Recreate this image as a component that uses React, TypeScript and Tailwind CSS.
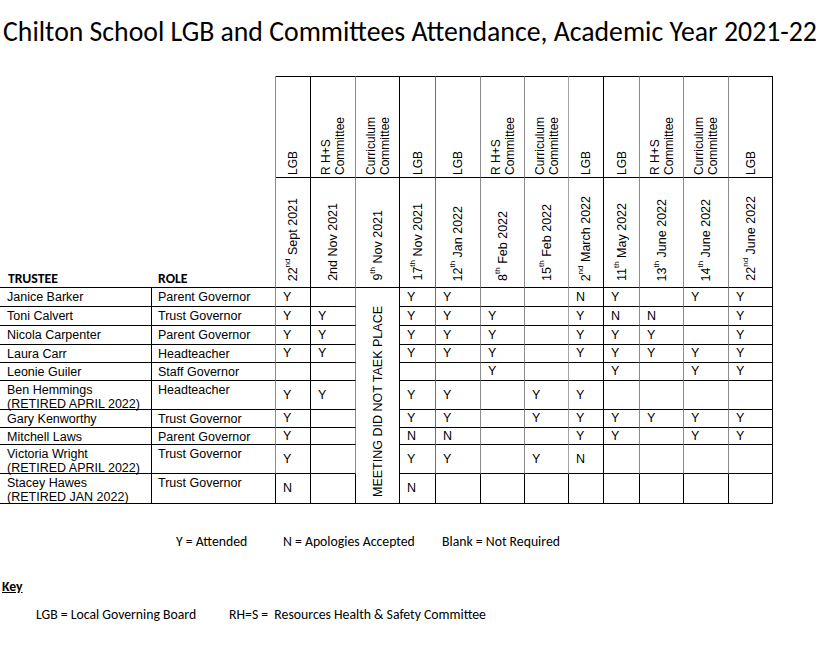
const calibri = "font-['Carlito','Lato',sans-serif]";

type Col = { label: string[]; day: string; sup: string; rest: string; edge: string };

// right-edge colour per meeting column, as in the Word table
const cols: Col[] = [
  { label: ["LGB"], day: "22", sup: "nd", rest: " Sept 2021", edge: "border-r-black" },
  { label: ["R H+S", "Committee"], day: "2nd Nov 2021", sup: "", rest: "", edge: "border-r-[#8c8c8c]" },
  { label: ["Curriculum", "Committee"], day: "9", sup: "th", rest: " Nov 2021", edge: "border-r-black" },
  { label: ["LGB"], day: "17", sup: "th", rest: " Nov 2021", edge: "border-r-[#6e6e6e]" },
  { label: ["LGB"], day: "12", sup: "th", rest: " Jan 2022", edge: "border-r-[#8c8c8c]" },
  { label: ["R H+S", "Committee"], day: "8", sup: "th", rest: " Feb 2022", edge: "border-r-[#8c8c8c]" },
  { label: ["Curriculum", "Committee"], day: "15", sup: "th", rest: " Feb 2022", edge: "border-r-[#a6a6a6]" },
  { label: ["LGB"], day: "2", sup: "nd", rest: " March 2022", edge: "border-r-black" },
  { label: ["LGB"], day: "11", sup: "th", rest: " May 2022", edge: "border-r-[#8c8c8c]" },
  { label: ["R H+S", "Committee"], day: "13", sup: "th", rest: " June 2022", edge: "border-r-[#8c8c8c]" },
  { label: ["Curriculum", "Committee"], day: "14", sup: "th", rest: " June 2022", edge: "border-r-[#8c8c8c]" },
  { label: ["LGB"], day: "22", sup: "nd", rest: " June 2022", edge: "border-r-black" },
];

const trustees = [
  { name: ["Janice Barker"], role: "Parent Governor", marks: "Y,,-,Y,Y,,,N,Y,,Y,Y" },
  { name: ["Toni Calvert"], role: "Trust Governor", marks: "Y,Y,-,Y,Y,Y,,Y,N,N,,Y" },
  { name: ["Nicola Carpenter"], role: "Parent Governor", marks: "Y,Y,-,Y,Y,Y,,Y,Y,Y,,Y" },
  { name: ["Laura Carr"], role: "Headteacher", marks: "Y,Y,-,Y,Y,Y,,Y,Y,Y,Y,Y" },
  { name: ["Leonie Guiler"], role: "Staff Governor", marks: ",,-,,,Y,,,Y,,Y,Y" },
  { name: ["Ben Hemmings", "(RETIRED APRIL 2022)"], role: "Headteacher", marks: "Y,Y,-,Y,Y,,Y,Y,,,," },
  { name: ["Gary Kenworthy"], role: "Trust Governor", marks: "Y,,-,Y,Y,,Y,Y,Y,Y,Y,Y" },
  { name: ["Mitchell Laws"], role: "Parent Governor", marks: "Y,,-,N,N,,,Y,Y,,Y,Y" },
  { name: ["Victoria Wright", "(RETIRED APRIL 2022)"], role: "Trust Governor", marks: "Y,,-,Y,Y,,Y,N,,,," },
  { name: ["Stacey Hawes", "(RETIRED JAN 2022)"], role: "Trust Governor", marks: "N,,-,N,,,,,,,," },
];

function Sideways({ children, className = "" }: { children: React.ReactNode; className?: string }) {
  return <span className={`[writing-mode:vertical-rl] rotate-180 whitespace-nowrap ${className}`}>{children}</span>;
}

export default function App() {
  return (
    <div className="w-[829px] h-[658px] bg-white text-black overflow-hidden">
      <h1 className={`${calibri} pt-[17px] pl-[3px] text-[27.75px] leading-[30px] whitespace-nowrap`}>
        Chilton School LGB and Committees Attendance, Academic Year 2021-22
      </h1>

      <div className="mt-[29px] grid w-[773px] grid-cols-[152px_124px_35px_45px_44px_36px_45px_44px_44px_35px_36px_44px_45px_44px] grid-rows-[102px_110px_19px_19px_19px_18px_18px_29px_18px_17px_29px_30px] font-['Liberation_Sans',Arial,sans-serif] text-[12.5px]">
        {/* committee names */}
        <div className="col-span-2 border-r border-r-[#8c8c8c]" />
        {cols.map((c, i) => (
          <div key={"l" + i} className={`flex items-end justify-center border-t border-b border-r border-black pb-[2px] ${c.edge}`}>
            <Sideways className="text-[12px] leading-[14px]">
              {c.label.map((l, j) => (
                <span key={j} className="block">{l}</span>
              ))}
            </Sideways>
          </div>
        ))}

        {/* meeting dates */}
        <div className={`${calibri} flex items-end pl-[8px] pb-[1px] border-b border-black font-bold text-[13.8px] leading-[15px]`}>TRUSTEE</div>
        <div className={`${calibri} flex items-end pl-[6px] pb-[1px] border-b border-r border-black border-r-[#8c8c8c] font-bold text-[13.8px] leading-[15px]`}>ROLE</div>
        {cols.map((c, i) => (
          <div key={"d" + i} className={`flex items-end justify-center border-b border-r border-black pb-[6px] ${c.edge}`}>
            <Sideways className="leading-[14px]">
              {c.day}
              {c.sup && <sup className="static align-super text-[8px]">{c.sup}</sup>}
              {c.rest}
            </Sideways>
          </div>
        ))}

        {trustees.map((t, r) => {
          const last = r === trustees.length - 1;
          return [
            <div key={"n" + r} className="pl-[7px] pt-[2px] leading-[14px] border-b border-r border-black whitespace-nowrap">
              {t.name.map((n, j) => (
                <div key={j}>{n}</div>
              ))}
            </div>,
            <div key={"r" + r} className={`pl-[6px] pt-[2px] leading-[14px] border-b border-r border-black whitespace-nowrap ${last ? "" : "border-r-[#8c8c8c]"}`}>
              {t.role}
            </div>,
            ...t.marks.split(",").map((m, i) => {
              if (m === "-") {
                if (r > 0) return null;
                return (
                  <div key={"m" + r + i} className="row-span-10 flex items-end justify-center border-b border-r border-black pb-[6px]">
                    <Sideways className="leading-[14px]">MEETING DID NOT TAEK PLACE</Sideways>
                  </div>
                );
              }
              return (
                <div key={"m" + r + i} className={`flex items-center pl-[7px] border-b border-r border-black ${last ? "" : cols[i].edge}`}>
                  {m}
                </div>
              );
            }),
          ];
        })}
      </div>

      <div className={`${calibri} mt-[30px] flex pl-[176px] text-[13.75px] leading-[16px] whitespace-nowrap`}>
        <span className="w-[107px]">Y = Attended</span>
        <span className="w-[159px]">N = Apologies Accepted</span>
        <span>Blank = Not Required</span>
      </div>

      <div className={`${calibri} mt-[29px] pl-[2px] text-[13.75px] leading-[16px] font-bold underline`}>Key</div>

      <div className={`${calibri} mt-[12px] flex pl-[36px] text-[13.75px] leading-[16px] whitespace-nowrap`}>
        <span className="w-[193px]">LGB = Local Governing Board</span>
        <span className="whitespace-pre">RH=S =  Resources Health &amp; Safety Committee</span>
      </div>
    </div>
  );
}
